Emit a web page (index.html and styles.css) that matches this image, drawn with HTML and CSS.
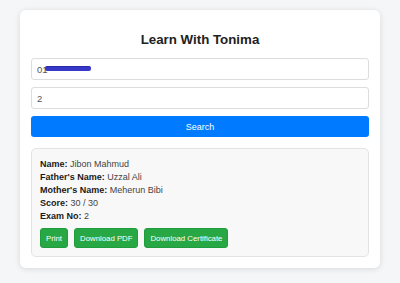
FILE: index.html
```html
<!DOCTYPE html>
<html lang="en">
<head>
  <meta charset="UTF-8">
  <meta name="viewport" content="width=device-width, initial-scale=1.0">
  <title>Learn With Tonima</title>
  <link rel="stylesheet" href="styles.css">
</head>
<body>
  <div class="container">
    <h1>Learn With Tonima</h1>
    <form id="searchForm">
      <div class="field-wrap">
        <input type="text" id="mobile" value="01">
        <span class="redact"></span>
      </div>
      <input type="text" id="exam" value="2">
      <button type="submit" class="search-btn">Search</button>
    </form>
    <div id="result">
      <p><strong>Name:</strong> Jibon Mahmud</p>
      <p><strong>Father's Name:</strong> Uzzal Ali</p>
      <p><strong>Mother's Name:</strong> Meherun Bibi</p>
      <p><strong>Score:</strong> 30 / 30</p>
      <p><strong>Exam No:</strong> 2</p>
      <div class="actions">
        <button class="btn-green">Print</button>
        <button class="btn-green">Download PDF</button>
        <button class="btn-green">Download Certificate</button>
      </div>
    </div>
  </div>
</body>
</html>
```

FILE: styles.css
```css
body {
  font-family: 'Liberation Sans', Arial, sans-serif;
  margin: 0;
  padding: 10px 20px 14px;
  background: #f4f6f8;
  color: #333;
}
.container {
  background: white;
  padding: 21px 11px 11px;
  border-radius: 6px;
  box-shadow: 0 1px 6px rgba(0, 0, 0, 0.12);
}
h1 {
  text-align: center;
  color: #222;
  font-size: 13.3px;
  margin: 0 0 10px;
  line-height: 17px;
}
form {
  display: flex;
  flex-direction: column;
  gap: 7px;
}
.field-wrap {
  position: relative;
}
input {
  display: block;
  width: 100%;
  box-sizing: border-box;
  height: 22px;
  padding: 0 5px;
  border: 1px solid #ddd;
  border-radius: 3px;
  font-family: inherit;
  font-size: 9.5px;
  color: #555;
}
.redact {
  position: absolute;
  left: 14px;
  top: 8px;
  width: 46px;
  height: 4px;
  background: #3838c8;
  border-top: 1px solid #2a2aa8;
  border-radius: 2px;
}
.search-btn {
  height: 21px;
  background-color: #007bff;
  color: white;
  border: none;
  border-radius: 3px;
  font-family: inherit;
  font-size: 9px;
  cursor: pointer;
}
#result {
  margin-top: 11px;
  background: #f8f8f8;
  border: 1px solid #e3e3e3;
  border-radius: 5px;
  padding: 9px 8px 8px;
  font-size: 9px;
  color: #444;
}
#result p {
  margin: 0;
  line-height: 13px;
}
#result strong {
  color: #1a1a1a;
}
.actions {
  display: flex;
  gap: 6px;
  margin-top: 5px;
}
.btn-green {
  height: 20px;
  padding: 0 5px;
  background-color: #28a745;
  color: white;
  border: 1px solid #1f9c3b;
  border-radius: 3px;
  font-family: inherit;
  font-size: 7.8px;
  cursor: pointer;
}
```
